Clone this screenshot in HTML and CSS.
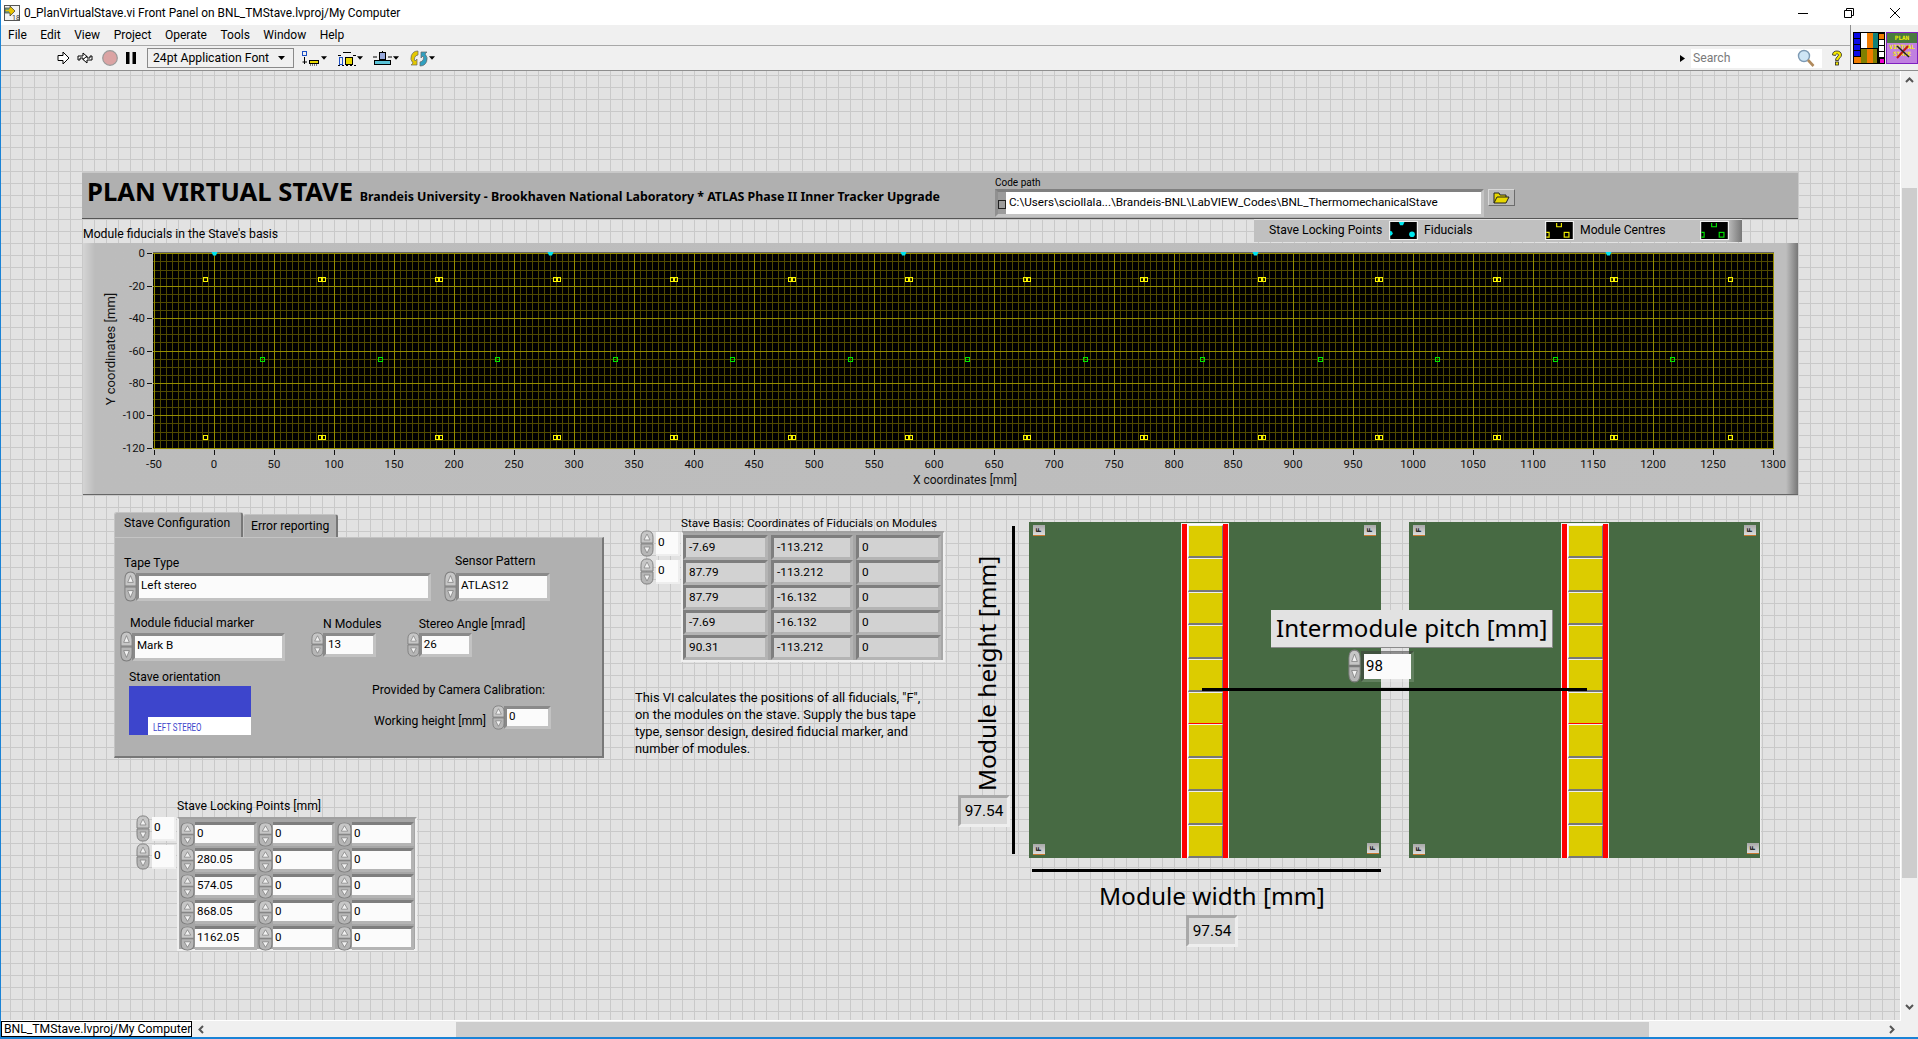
FILE: index.html
```html
<!DOCTYPE html>
<html lang="en">
<head>
  <meta charset="UTF-8" />
  <title>0_PlanVirtualStave.vi Front Panel</title>
  <link rel="stylesheet" href="styles.css">
</head>
<body>

  <!-- shared shapes -->
  <svg class="defs" width="0" height="0">
    <symbol id="spin" viewBox="0 0 14 30" preserveAspectRatio="none">
      <path d="M1 14.5V8Q1 1 7 1T13 8V14.5Z" fill="#c6c6c6" stroke="#7c7c7c"/>
      <path d="M1 15.5V22Q1 29 7 29T13 22V15.5Z" fill="#b6b6b6" stroke="#7c7c7c"/>
      <path d="M7 4.5 10 11H4Z" fill="#f2f2f2" stroke="#666" stroke-width=".6"/>
      <path d="M7 25.5 10 19H4Z" fill="#f2f2f2" stroke="#666" stroke-width=".6"/>
    </symbol>
    <symbol id="caret" viewBox="0 0 7 4"><path d="M0 0H7L3.5 4Z"/></symbol>
  </svg>

  <div class="window">

    <header class="titlebar">
      <svg class="vi-icon" width="16" height="16" viewBox="0 0 16 16">
        <rect x=".5" y=".5" width="15" height="15" fill="#f4f4f4" stroke="#555"/>
        <path d="M1 3H6V1L11 6 6 11V8H1Z" fill="#e8c400" stroke="#333" stroke-width=".7"/>
        <path d="M1 4H5M1 7H5" stroke="#1c6fc4"/>
        <text x="8" y="15" class="vi-ver">18</text>
      </svg>
      <span class="titlebar-text">0_PlanVirtualStave.vi Front Panel on BNL_TMStave.lvproj/My Computer</span>
      <div class="winbtns">
        <svg width="10" height="10" viewBox="0 0 10 10"><path d="M0 5.5H10" stroke="#000"/></svg>
        <svg width="10" height="10" viewBox="0 0 10 10" fill="none" stroke="#000"><path d="M.5 2.5H7.5V9.5H.5ZM2.5 2.5V.5H9.5V7.5H7.5"/></svg>
        <svg width="10" height="10" viewBox="0 0 10 10"><path d="M0 0 10 10M10 0 0 10" stroke="#000"/></svg>
      </div>
    </header>

    <div class="bars">
      <div class="bars-main">
        <nav class="menubar">
          <span>File</span><span>Edit</span><span>View</span><span>Project</span>
          <span>Operate</span><span>Tools</span><span>Window</span><span>Help</span>
        </nav>
        <div class="toolbar">
          <svg class="tb-run" width="13" height="14" viewBox="0 0 13 14"><path d="M1 4.5H6V1L12 7 6 13V9.5H1Z" fill="#fff" stroke="#000"/></svg>
          <svg class="tb-cont" width="16" height="14" viewBox="0 0 16 14" fill="#fff" stroke="#000"><path d="M1 5H6V2L10 5.5 6 9V7H3V9H1Z"/><path d="M15 9H10V12L6 8.5 10 5V7H13V5H15Z"/></svg>
          <svg class="tb-abort" width="16" height="16" viewBox="0 0 16 16"><circle cx="8" cy="8" r="7.3" fill="#dba3a3" stroke="#9a9a9a" stroke-width="1.2"/></svg>
          <svg class="tb-pause" width="10" height="12" viewBox="0 0 10 12"><path d="M0 0H3.5V12H0ZM6.5 0H10V12H6.5Z"/></svg>
          <div class="font-ring">24pt Application Font<svg width="7" height="4"><use href="#caret"/></svg></div>
          <div class="tb-drop tb-align">
            <svg width="18" height="15" viewBox="0 0 18 15" fill="none" stroke="#000"><rect x=".5" y=".5" width="4" height="4" stroke="#1c4fc4"/><path d="M2.5 6V9M.5 11H5M2.5 9V13"/><rect x="7.5" y="9.5" width="9" height="3" fill="#e8d800"/><path d="M8 14H16" stroke-dasharray="1 1"/></svg>
            <svg width="6" height="4"><use href="#caret"/></svg>
          </div>
          <div class="tb-drop tb-dist">
            <svg width="18" height="15" viewBox="0 0 18 15" fill="none" stroke="#000"><path d="M0 4.5H3M5 1.5H13M15 4.5H18"/><rect x="1.5" y="6.5" width="3" height="7" stroke="#1c4fc4"/><rect x="7.5" y="6.5" width="7" height="7" fill="#e8d800"/><path d="M0 14.5H18" stroke-dasharray="2 2"/></svg>
            <svg width="6" height="4"><use href="#caret"/></svg>
          </div>
          <div class="tb-drop tb-size">
            <svg width="19" height="15" viewBox="0 0 19 15" fill="none" stroke="#000"><path d="M0 6H4M15 6H19M9.5 0V9"/><rect x="6.5" y="1.5" width="6" height="7" fill="#9ad"/><rect x="1.5" y="9.5" width="16" height="4" fill="#5cc4d8"/></svg>
            <svg width="6" height="4"><use href="#caret"/></svg>
          </div>
          <div class="tb-drop tb-order">
            <svg width="18" height="17" viewBox="0 0 18 17"><path d="M8 1A7 7 0 0 0 3 13L1 15H7V9L5 11A4 4 0 0 1 8 5Z" fill="#e4c800" stroke="#666" stroke-width=".7"/><path d="M10 16A7 7 0 0 0 15 4L17 2H11V8L13 6A4 4 0 0 1 10 12Z" fill="#30a0c0" stroke="#666" stroke-width=".7"/></svg>
            <svg width="6" height="4"><use href="#caret"/></svg>
          </div>
          <svg class="tb-more" width="5" height="7" viewBox="0 0 5 7"><path d="M0 0 5 3.5 0 7Z"/></svg>
          <div class="searchbox">
            <span>Search</span>
            <svg width="18" height="18" viewBox="0 0 18 18"><circle cx="7" cy="7" r="5.5" fill="#cfe6f6" stroke="#7d9ab4" stroke-width="1.4"/><path d="M11 11 16.5 17" stroke="#b08a5c" stroke-width="2.6"/></svg>
          </div>
          <svg class="tb-help" width="12" height="16" viewBox="0 0 12 16"><path d="M1.5 5C1.5 2 3.5 1 6 1S10.5 2.5 10.5 5 7.5 8 7.5 10.5H4.5C4.5 7 7.5 6.5 7.5 5 7.5 3.5 4.5 3.5 4.5 5.5Z" fill="#f6e800" stroke="#222" stroke-width=".8"/><rect x="4.5" y="12" width="3" height="3" fill="#f6e800" stroke="#222" stroke-width=".8"/></svg>
        </div>
      </div>
      <div class="vi-icons">
        <svg width="32" height="32" viewBox="0 0 32 32" shape-rendering="crispEdges">
          <rect width="32" height="32"/>
          <path d="M1 1H7V6H1ZM1 7H7V12H1ZM1 13H7V18H1ZM1 19H7V24H1Z" fill="#0a0ae6"/>
          <rect x="1" y="25" width="7" height="6" fill="#f07c00"/>
          <rect x="8" y="1" width="6" height="15" fill="#fff"/>
          <rect x="14" y="1" width="6" height="15" fill="#f07c00"/>
          <rect x="20" y="1" width="5" height="15" fill="#108078"/>
          <rect x="8" y="17" width="6" height="14" fill="#808000"/>
          <rect x="14" y="17" width="6" height="14" fill="#f07c00"/>
          <rect x="20" y="17" width="4" height="14" fill="#808000"/>
          <rect x="26" y="2" width="5" height="5" fill="#f07c00"/>
          <path d="M26 8H31V13H26ZM26 14H31V19H26ZM26 20H31V25H26Z" fill="#fff"/>
          <rect x="27" y="27" width="4" height="4" fill="#f000d0"/>
        </svg>
        <div class="vi-badge">
          <span class="vi-badge-top">PLAN</span>
          <span>VIRTUAL</span>
          <span>STAVE</span>
          <svg width="16" height="16" viewBox="0 0 16 16"><path d="M2 15 13 3" stroke="#c01818" stroke-width="2"/><path d="M2 3 14 14" stroke="#222" stroke-width="1.6"/></svg>
        </div>
      </div>
    </div>

    <div class="workspace">
      <main class="panel">

        <section class="banner">
          <h1 class="headline">PLAN VIRTUAL STAVE <small>Brandeis University - Brookhaven National Laboratory * ATLAS Phase II Inner Tracker Upgrade</small></h1>
          <div class="codepath">
            <div class="codepath-label">Code path</div>
            <div class="codepath-row">
              <div class="pathbox">
                <span class="path-pin"></span>
                <span class="path-text">C:\Users\sciollala...\Brandeis-BNL\LabVIEW_Codes\BNL_ThermomechanicalStave</span>
              </div>
              <button class="browse">
                <svg width="17" height="12" viewBox="0 0 17 12"><path d="M1 11V1H6L7 3H13V5" fill="#e8d800" stroke="#222"/><path d="M1 11 4 5H16L13 11Z" fill="#e8d800" stroke="#222"/></svg>
              </button>
            </div>
          </div>
        </section>

        <div class="plot-caption">Module fiducials in the Stave's basis</div>

        <div class="legend">
          <span class="legend-name">Stave Locking Points</span>
          <svg class="swatch" viewBox="0 0 28 18" fill="#00e8f0"><rect width="28" height="18" fill="#000"/><path d="M9 0H15L13.5 3.5H10.5Z"/><circle cx="0" cy="12" r="2.5"/><circle cx="23" cy="13" r="3"/></svg>
          <span class="legend-name legend-fid">Fiducials</span>
          <svg class="swatch" viewBox="0 0 28 18" fill="none" stroke="#f4f000" stroke-width="1.2"><rect width="28" height="18" fill="#000" stroke="none"/><path d="M11 1V5H16V1"/><path d="M0 11H3V16H0"/><rect x="19" y="11" width="5" height="5"/></svg>
          <span class="legend-name legend-mod">Module Centres</span>
          <svg class="swatch" viewBox="0 0 28 18" fill="none" stroke="#00e800" stroke-width="1.2"><rect width="28" height="18" fill="#000" stroke="none"/><path d="M11 1V5H16V1"/><path d="M0 11H3V16H0"/><rect x="19" y="11" width="5" height="5"/></svg>
        </div>

        <div class="graph">
          <svg id="plot" width="1715" height="252" viewBox="0 0 1715 252"></svg>
        </div>

        <section class="tabctl">
          <div class="tabs">
            <div class="tab tab-on">Stave Configuration</div>
            <div class="tab">Error reporting</div>
          </div>
          <div class="tabpage">
            <div class="row row-a">
              <div class="field field-tape">
                <label>Tape Type</label>
                <div class="ctl">
                  <svg class="spin"><use href="#spin"/></svg>
                  <div class="box box-tape">Left stereo</div>
                </div>
              </div>
              <div class="field field-sensor">
                <label>Sensor Pattern</label>
                <div class="ctl">
                  <svg class="spin"><use href="#spin"/></svg>
                  <div class="box box-sensor">ATLAS12</div>
                </div>
              </div>
            </div>
            <div class="row row-b">
              <div class="field field-marker">
                <label>Module fiducial marker</label>
                <div class="ctl">
                  <svg class="spin"><use href="#spin"/></svg>
                  <div class="box box-marker">Mark B</div>
                </div>
              </div>
              <div class="field field-n">
                <label>N Modules</label>
                <div class="ctl">
                  <svg class="spin spin-sm"><use href="#spin"/></svg>
                  <div class="box box-sm">13</div>
                </div>
              </div>
              <div class="field field-angle">
                <label>Stereo Angle [mrad]</label>
                <div class="ctl">
                  <svg class="spin spin-sm"><use href="#spin"/></svg>
                  <div class="box box-sm">26</div>
                </div>
              </div>
            </div>
            <div class="row row-c">
              <div class="field field-orient">
                <label>Stave orientation</label>
                <div class="orient"><span class="orient-tag"><span>LEFT STEREO</span></span></div>
              </div>
              <div class="calib">
                <div class="calib-head">Provided by Camera Calibration:</div>
                <div class="calib-row">
                  <span class="calib-name">Working height [mm]</span>
                  <svg class="spin spin-xs"><use href="#spin"/></svg>
                  <div class="box box-height">0</div>
                </div>
              </div>
            </div>
          </div>
        </section>

        <section class="arrayblock array-basis">
          <div class="array-index">
            <div class="ctl"><svg class="spin spin-idx"><use href="#spin"/></svg><div class="idx">0</div></div>
            <div class="ctl"><svg class="spin spin-idx"><use href="#spin"/></svg><div class="idx">0</div></div>
          </div>
          <div>
            <div class="array-label">Stave Basis: Coordinates of Fiducials on Modules</div>
            <div class="table table-read">
              <div class="cell">-7.69</div><div class="cell">-113.212</div><div class="cell">0</div>
              <div class="cell">87.79</div><div class="cell">-113.212</div><div class="cell">0</div>
              <div class="cell">87.79</div><div class="cell">-16.132</div><div class="cell">0</div>
              <div class="cell">-7.69</div><div class="cell">-16.132</div><div class="cell">0</div>
              <div class="cell">90.31</div><div class="cell">-113.212</div><div class="cell">0</div>
            </div>
          </div>
        </section>

        <p class="note">This VI calculates the positions of all fiducials, "F",<br>on the modules on the stave. Supply the bus tape<br>type, sensor design, desired fiducial marker, and<br>number of modules.</p>

        <section class="arrayblock array-lock">
          <div class="array-index">
            <div class="ctl"><svg class="spin spin-idx"><use href="#spin"/></svg><div class="idx">0</div></div>
            <div class="ctl"><svg class="spin spin-idx"><use href="#spin"/></svg><div class="idx">0</div></div>
          </div>
          <div>
            <div class="array-label">Stave Locking Points [mm]</div>
            <div class="table table-edit" id="lock-table"></div>
          </div>
        </section>

        <div class="module module-a"></div>
        <div class="module module-b"></div>

        <div class="bar bar-height"></div>
        <div class="bar bar-width"></div>
        <div class="bar bar-pitch"></div>

        <div class="dim dim-height">Module height [mm]</div>
        <div class="dim dim-width">Module width [mm]</div>
        <div class="readout readout-height">97.54</div>
        <div class="readout readout-width">97.54</div>

        <div class="pitch-label">Intermodule pitch [mm]</div>
        <div class="ctl pitch-ctl">
          <svg class="spin spin-pitch"><use href="#spin"/></svg>
          <div class="box box-pitch">98</div>
        </div>

      </main>
      <aside class="vscroll">
        <svg width="9" height="6" viewBox="0 0 9 6" fill="none" stroke="#555" stroke-width="2"><path d="M1 5 4.5 1.5 8 5"/></svg>
        <div class="vthumb"></div>
        <svg width="9" height="6" viewBox="0 0 9 6" fill="none" stroke="#555" stroke-width="2"><path d="M1 1 4.5 4.5 8 1"/></svg>
      </aside>
    </div>

    <footer class="hscroll">
      <div class="target">BNL_TMStave.lvproj/My Computer</div>
      <svg class="arrow-l" width="6" height="9" viewBox="0 0 6 9" fill="none" stroke="#555" stroke-width="2"><path d="M5 1 1.5 4.5 5 8"/></svg>
      <div class="hthumb"></div>
      <svg class="arrow-r" width="6" height="9" viewBox="0 0 6 9" fill="none" stroke="#555" stroke-width="2"><path d="M1 1 4.5 4.5 1 8"/></svg>
    </footer>
  </div>

  <script src="plot.js"></script>
</body>
</html>
```

FILE: styles.css
```css
:root {
  --canvas: #e2e2e2;
  --grid: #c9c9c9;
  --panel: #b0b0b0;
  --chrome: #f0f0f0;
  --blue-edge: #1a83d6;
  --ui: 12.2px;
}

* {
  margin: 0;
  padding: 0;
  box-sizing: border-box;
}

body {
  font-family: Roboto, "Noto Sans", sans-serif;
  font-size: var(--ui);
  color: #000;
  background: var(--canvas);
  overflow: hidden;
}

.defs {
  position: absolute;
}

.window {
  height: 100vh;
  display: flex;
  flex-direction: column;
  border-left: 1px solid var(--blue-edge);
  border-bottom: 2px solid var(--blue-edge);
}

/* title bar */
.titlebar {
  height: 25px;
  flex: none;
  background: #fff;
  display: flex;
  align-items: center;
  padding-left: 3px;
}

.vi-ver {
  font-size: 7px;
  fill: #333;
}

.titlebar-text {
  margin-left: 4px;
  font-size: 11.9px;
}

.winbtns {
  margin-left: auto;
  display: flex;
  gap: 36px;
  padding-right: 18px;
}

/* menu and tool bars */
.bars {
  height: 46px;
  flex: none;
  display: flex;
  border-bottom: 1px solid #8e8e8e;
  background: var(--chrome);
}

.bars-main {
  flex: 1;
}

.menubar {
  height: 21px;
  display: flex;
  align-items: center;
  gap: 13.5px;
  padding-left: 7px;
  font-size: 12px;
  border-bottom: 1px solid #a8a8a8;
}

.toolbar {
  height: 24px;
  display: flex;
  align-items: center;
  padding-left: 56px;
}

.tb-cont { margin-left: 7px; }
.tb-abort { margin-left: 9px; }
.tb-pause { margin-left: 8px; }

.font-ring {
  width: 147px;
  height: 20px;
  margin-left: 11px;
  border: 1px solid #8a8a8a;
  display: flex;
  align-items: center;
  justify-content: space-between;
  padding: 0 8px 0 5px;
  white-space: nowrap;
}

.tb-drop {
  display: flex;
  align-items: center;
  gap: 1px;
}

.tb-align { margin-left: 8px; }
.tb-dist { margin-left: 11px; }
.tb-size { margin-left: 10px; }
.tb-order { margin-left: 11px; }

.tb-more { margin-left: 1245px; }

.searchbox {
  width: 131px;
  height: 19px;
  margin-left: 6px;
  background: #fff;
  display: flex;
  align-items: center;
  justify-content: space-between;
  padding: 0 7px 0 2px;
  color: #7a7a7a;
}

.tb-help { margin-left: 9px; }

.vi-icons {
  width: 68px;
  flex: none;
  display: flex;
  gap: 1px;
  align-items: center;
  padding-left: 2px;
  border-left: 1px solid #8e8e8e;
  background: var(--chrome);
}

.vi-badge {
  position: relative;
  width: 32px;
  height: 32px;
  background: linear-gradient(#4a7a40 0 10px, #c080e0 10px);
  border: 1px solid #8020c0;
  display: flex;
  flex-direction: column;
  align-items: center;
  font: bold 6px/7px "DejaVu Sans Mono", monospace;
  color: #f4f000;
  overflow: hidden;
}

.vi-badge-top {
  margin-top: 1px;
  margin-bottom: 2px;
}

.vi-badge svg {
  position: absolute;
  left: 8px;
  top: 10px;
}

/* front panel */
.workspace {
  flex: 1;
  min-height: 0;
  display: flex;
}

.panel {
  flex: 1;
  position: relative;
  overflow: hidden;
  border-bottom: 1px solid #fff;
  border-right: 1px solid #fff;
  background-color: var(--canvas);
  background-image:
    linear-gradient(var(--grid) 1px, transparent 1px),
    linear-gradient(90deg, var(--grid) 1px, transparent 1px);
  background-size: 12px 12px;
  background-position: 0 4px, 9px 0;
}

.vscroll {
  width: 17px;
  flex: none;
  background: var(--chrome);
  display: flex;
  flex-direction: column;
  align-items: center;
  padding: 6px 0 5px;
}

.vthumb {
  width: 15px;
  height: 690px;
  margin: 105px 0 126px;
  background: #cdcdcd;
}

.hscroll {
  height: 16px;
  flex: none;
  background: var(--chrome);
  display: flex;
  align-items: center;
}

.target {
  width: 191px;
  height: 16px;
  border: 1px solid #000;
  background: #fff;
  line-height: 14px;
  padding-left: 2px;
  white-space: nowrap;
}

.arrow-l { margin-left: 6px; }

.hthumb {
  width: 1193px;
  height: 15px;
  margin-left: 252px;
  background: #cdcdcd;
}

.arrow-r { margin-left: 240px; }

/* banner */
.banner {
  position: absolute;
  left: 81px;
  top: 101px;
  width: 1716px;
  height: 47px;
  background: var(--panel);
  border-top: 1px solid #c8c8c8;
  border-bottom: 1px solid #555;
  display: flex;
  padding-left: 5px;
}

.headline {
  width: 908px;
  flex: none;
  font-family: "Noto Sans", sans-serif;
  font-size: 25.6px;
  font-weight: bold;
  line-height: 38px;
  white-space: nowrap;
}

.headline small {
  font-size: 12.4px;
}

.codepath {
  padding-top: 3px;
}

.codepath-label {
  font-size: 10px;
  line-height: 13px;
}

.codepath-row {
  display: flex;
  gap: 4px;
  align-items: flex-start;
}

.pathbox {
  width: 489px;
  height: 28px;
  border: 3px solid;
  border-color: #808080 #c4c4c4 #c4c4c4 #909090;
  background: #9c9c9c;
  display: flex;
}

.path-pin {
  width: 8px;
  flex: none;
  border: 1px solid #222;
  height: 9px;
  margin-top: 8px;
}

.path-text {
  flex: 1;
  background: #fff;
  padding-left: 3px;
  line-height: 20px;
  font-size: 11.7px;
  white-space: nowrap;
}

.browse {
  width: 27px;
  height: 17px;
  background: #b8b8b8;
  border: 1px solid;
  border-color: #d8d8d8 #6c6c6c #6c6c6c #d8d8d8;
  display: flex;
  align-items: center;
  justify-content: center;
}

.plot-caption {
  position: absolute;
  left: 82px;
  top: 155px;
  line-height: 16px;
}

/* legend */
.legend {
  position: absolute;
  left: 1253px;
  top: 148px;
  width: 488px;
  height: 23px;
  display: flex;
  align-items: center;
  padding: 0 0 2px 15px;
  background: linear-gradient(90deg, #c0c0c0 97%, #777);
  border-top: 1px solid #e0e0e0;
}

.legend-name {
  flex: none;
}

.legend-name:first-child { width: 120px; }
.legend-fid { width: 121px; margin-left: 6px; }
.legend-mod { width: 120px; margin-left: 6px; }

.swatch {
  width: 29px;
  height: 19px;
  flex: none;
  border: 1px solid #eee;
}

/* graph */
.graph {
  position: absolute;
  left: 82px;
  top: 172px;
  width: 1715px;
  height: 252px;
  background: linear-gradient(90deg, #d4d4d4, #bcbcbc 12px, #bebebe 1703px, #777);
  border-bottom: 1px solid #666;
}

.tick {
  font-size: 12px;
  fill: #111;
}

.tick-num {
  font-size: 11.4px;
}

.tick-ytitle {
  font-size: 13px;
}

/* tab control */
.tabctl {
  position: absolute;
  left: 113px;
  top: 441px;
  width: 490px;
}

.tabs {
  height: 25px;
  display: flex;
  align-items: flex-end;
}

.tab {
  width: 95px;
  height: 23px;
  background: var(--panel);
  border-top: 1px solid #c4c4c4;
  border-left: 1px solid #c4c4c4;
  border-right: 2px solid #777;
  border-radius: 3px 3px 0 0;
  padding-left: 7px;
  line-height: 22px;
  white-space: nowrap;
}

.tab-on {
  width: 129px;
  height: 25px;
  padding-left: 9px;
  line-height: 21px;
}

.tabpage {
  height: 221px;
  background: var(--panel);
  border: 1px solid #c4c4c4;
  border-right: 2px solid #777;
  border-bottom: 2px solid #777;
}

.row {
  display: flex;
  align-items: flex-start;
}

.field label {
  display: block;
  line-height: 16px;
  white-space: nowrap;
}

.ctl {
  display: flex;
  align-items: center;
}

.spin {
  width: 13px;
  height: 31px;
  flex: none;
  position: relative;
  z-index: 1;
}

.spin-sm { height: 25px; }
.spin-xs { height: 25px; margin-left: 3px; }
.spin-idx { width: 14px; height: 27px; }
.spin-pitch { height: 34px; }

.box {
  height: 28px;
  flex: none;
  border: 3px solid;
  border-color: #8a8a8a #c2c2c2 #c2c2c2 #8a8a8a;
  background: #fbfbfb;
  padding-left: 2px;
  line-height: 19px;
  font-size: 11.6px;
  white-space: nowrap;
}

.row-a { padding: 17px 0 0 9px; height: 81px; }
.row-a .field-tape label { margin-bottom: 0; }
.row-a .field-sensor { margin-left: 13px; margin-top: -2px; }
.row-a .field-sensor label { margin-left: 11px; margin-bottom: 2px; }
.box-tape { width: 295px; margin-left: -1px; }
.box-sensor { width: 94px; margin-left: -1px; }

.row-b { padding-left: 5px; height: 46px; margin-top: -4px; }
.field-marker label { margin-left: 10px; margin-bottom: 0; }
.box-marker { width: 153px; margin-left: -1px; }
.field-n { margin-left: 26px; margin-top: 1px; }
.field-n label { margin-left: 12px; margin-bottom: 0; }
.field-angle { margin-left: 25px; margin-top: 1px; }
.field-angle label { margin-left: 12px; margin-bottom: 0; }
.box-sm { width: 53px; height: 24px; line-height: 17px; margin-left: -1px; }

.row-c { padding-left: 14px; margin-top: 8px; }
.orient {
  width: 122px;
  height: 49px;
  margin-top: 1px;
  background: #3d45cc;
  position: relative;
}

.orient-tag {
  position: absolute;
  left: 19px;
  top: 31px;
  width: 103px;
  height: 18px;
  background: #fff;
  color: #3d45cc;
  font-size: 11px;
  line-height: 21px;
  padding-left: 5px;
  white-space: nowrap;
}

.orient-tag span {
  display: inline-block;
  transform: scaleX(.72);
  transform-origin: 0 50%;
}

.calib {
  margin-left: 121px;
  margin-top: 13px;
}

.calib-head {
  line-height: 16px;
}

.calib-row {
  display: flex;
  align-items: center;
  margin-left: 2px;
  margin-top: 7px;
}

.calib-name {
  width: 115px;
  margin-top: 7px;
  white-space: nowrap;
}

.box-height {
  width: 47px;
  height: 23px;
  line-height: 15px;
  margin-left: -1px;
}

/* arrays */
.arrayblock {
  position: absolute;
  display: flex;
}

.array-basis {
  left: 639px;
  top: 446px;
}

.array-lock {
  left: 135px;
  top: 729px;
}

.array-index {
  width: 41px;
  flex: none;
  display: flex;
  flex-direction: column;
  gap: 1px;
  padding-top: 13px;
}

.array-lock .array-index {
  padding-top: 15px;
}

.idx {
  width: 24px;
  height: 24px;
  margin-left: 2px;
  background: #fbfbfb;
  border-bottom: 2px solid #eee;
  border-right: 2px solid #eee;
  padding-left: 2px;
  line-height: 21px;
  font-size: 11.8px;
}

.array-label {
  height: 14px;
  line-height: 13px;
  font-size: 11.7px;
  white-space: nowrap;
}

.array-lock .array-label {
  height: 17px;
  font-size: var(--ui);
}

.table {
  display: grid;
  background: #a6a6a6;
  border: 2px solid;
  border-color: #a0a0a0 #efefef #efefef #efefef;
}

.table-read {
  width: 264px;
  grid-template-columns: 85px 82px 85px;
  grid-auto-rows: 25px;
  column-gap: 3px;
  padding: 2px 0 0 0;
}

.cell {
  border: 3px solid;
  border-color: #7e7e7e #b4b4b4 #b4b4b4 #7e7e7e;
  background: #d2d2d2;
  padding-left: 3px;
  line-height: 18px;
  font-size: 11.8px;
}

.table-edit {
  width: 240px;
  grid-template-columns: 78px 79px 78px;
  grid-auto-rows: 26px;
  padding: 2px 0 0 1px;
  height: 134px;
}

.cell-edit {
  display: flex;
  align-items: center;
}

.cell-edit .spin {
  width: 15px;
  height: 25px;
}

.cell-edit .box {
  width: 62px;
  height: 24px;
  line-height: 17px;
  border-left-width: 0;
  border-color: #7e7e7e #b4b4b4 #b4b4b4 #7e7e7e;
}

.note {
  position: absolute;
  left: 634px;
  top: 618px;
  font-size: 12.9px;
  line-height: 17px;
  white-space: nowrap;
}

/* module drawing */
.module {
  position: absolute;
  top: 451px;
  width: 352px;
  height: 336px;
  background: #476a43;
  display: flex;
  justify-content: center;
}

.module-a { left: 1028px; }
.module-b { left: 1408px; border-right: 1px solid #eee; }

.strip {
  width: 48px;
  margin-top: 1px;
  background: #fff;
  border: 1px solid #f0f0f0;
  border-bottom: none;
  display: flex;
}

.rail {
  width: 5px;
  background: #fe0000;
  flex: none;
}

.rail:first-child { margin-right: 1px; }

.cells {
  flex: 1;
  display: flex;
  flex-direction: column;
  padding-top: 1px;
}

.cells div {
  flex: 1;
  background: #dccc00;
  border-top: 1px solid #eee;
  border-left: 1px solid #eee;
  border-right: 1px solid #777;
  border-bottom: 2px solid #777;
}

.cells .cell-split {
  border-bottom: 1px solid #fe0000;
}

.fid {
  position: absolute;
  width: 12px;
  height: 11px;
  background: linear-gradient(#a8a8a8, #dcdcdc);
  border-bottom: 1px solid #c87830;
  font: bold 7px/10px "Liberation Sans", sans-serif;
  text-align: center;
}

.fid span {
  display: block;
  transform: rotate(-90deg);
}

.fid-tl { left: 4px; top: 3px; }
.fid-tr { left: 335px; top: 3px; }
.fid-bl { left: 4px; top: 322px; }
.fid-br { left: 338px; top: 321px; }

.bar {
  position: absolute;
  background: #000;
}

.bar-height { left: 1011px; top: 455px; width: 3px; height: 328px; }
.bar-width { left: 1031px; top: 798px; width: 349px; height: 3px; }
.bar-pitch { left: 1201px; top: 617px; width: 385px; height: 3px; }

.dim {
  position: absolute;
  font-family: "Noto Sans", sans-serif;
  font-size: 24.4px;
  line-height: 34px;
  white-space: nowrap;
}

.dim-height {
  left: 969px;
  top: 484px;
  height: 237px;
  writing-mode: vertical-rl;
  transform: rotate(180deg);
  text-align: center;
}

.dim-width {
  left: 1098px;
  top: 808px;
}

.readout {
  position: absolute;
  width: 52px;
  height: 32px;
  border: 3px solid;
  border-color: #a8a8a8 #eee #eee #a8a8a8;
  background: #d8d8d8;
  font-size: 15.4px;
  line-height: 26px;
  text-align: center;
}

.readout-height { left: 957px; top: 724px; }
.readout-width { left: 1185px; top: 844px; }

.pitch-label {
  position: absolute;
  left: 1270px;
  top: 539px;
  width: 282px;
  height: 38px;
  background: #e2e2e2;
  border-right: 1px solid #8a8a8a;
  border-bottom: 1px solid #8a8a8a;
  font-family: "Noto Sans", sans-serif;
  font-size: 24.1px;
  line-height: 36px;
  padding-left: 5px;
  white-space: nowrap;
}

.pitch-ctl {
  position: absolute;
  left: 1347px;
  top: 578px;
}

.box-pitch {
  width: 53px;
  height: 31px;
  border-color: rgba(60, 60, 60, .5) rgba(255, 255, 255, .15) rgba(255, 255, 255, .15) rgba(60, 60, 60, .5);
  font-size: 15px;
  line-height: 25px;
  background-clip: padding-box;
}
```

FILE: plot.js
```js
// chart and repeated parts of the panel
var ox = 83, oy = 243;          // graph origin on screen
var plotL = 153, plotR = 1774, plotT = 252, plotB = 448;
var minorCol = '#504a00', majorCol = '#958d00';

function px(v) { return Math.round(214.3 + v * 1.199) - ox; }
function py(v) { return Math.round(253.3 - v * 1.62) - oy; }

var s = [];
s.push('<rect x="' + (plotL - ox) + '" y="' + (plotT - oy) + '" width="' + (plotR - plotL) + '" height="' + (plotB - plotT) + '" fill="#000"/>');
s.push('<g shape-rendering="crispEdges">');

// minor grid every 5 mm, major every 50 (x) and 20 (y)
for (var w = 0; w >= -120; w -= 5) {
  if (w % 20 !== 0) s.push('<path d="M' + (plotL - ox) + ' ' + (py(w) + .5) + 'H' + (plotR - ox) + '" stroke="' + minorCol + '"/>');
}
for (var v = -50; v <= 1300; v += 5) {
  if (v % 50 !== 0) s.push('<path d="M' + (px(v) + .5) + ' ' + (plotT - oy) + 'V' + (plotB - oy) + '" stroke="' + minorCol + '"/>');
}
for (w = 0; w >= -120; w -= 20) {
  s.push('<path d="M' + (plotL - ox) + ' ' + (py(w) + .5) + 'H' + (plotR - ox) + '" stroke="' + majorCol + '"/>');
}
for (v = -50; v <= 1300; v += 50) {
  s.push('<path d="M' + (px(v) + .5) + ' ' + (plotT - oy) + 'V' + (plotB - oy) + '" stroke="' + majorCol + '"/>');
}

// axis frame and ticks
s.push('<path d="M' + (plotL - ox) + ' ' + (plotT - oy + .5) + 'H' + (plotR - ox) + '" stroke="#666"/>');
for (var t = -50; t <= 1300; t += 50) {
  s.push('<path d="M' + (px(t) + .5) + ' ' + (plotB - oy + 2) + 'v5" stroke="#111"/>');
  s.push('<text class="tick tick-num" text-anchor="middle" x="' + px(t) + '" y="' + (plotB - oy + 20) + '">' + t + '</text>');
}
for (var u = 0; u >= -120; u -= 20) {
  s.push('<path d="M' + (plotL - ox - 6) + ' ' + (py(u) + .5) + 'h5" stroke="#111"/>');
  s.push('<text class="tick tick-num" text-anchor="end" x="' + (plotL - ox - 8) + '" y="' + (py(u) + 4) + '">' + u + '</text>');
}

function square(x, y, col) {
  s.push('<rect x="' + (px(x) - 2) + '.5" y="' + (py(y) - 2) + '.5" width="4" height="4" fill="none" stroke="' + col + '"/>');
}

// fiducials and module centres, 13 modules at 98 mm pitch
for (var k = 0; k < 13; k++) {
  var a = -7.69 + 98 * k, b = 87.79 + 98 * k;
  square(a, -16.132, '#f8f400');
  square(b, -16.132, '#f8f400');
  square(a, -113.212, '#f8f400');
  square(b, -113.212, '#f8f400');
  square(40.05 + 98 * k, -65, '#00e800');
}
s.push('</g>');

// locking points sit on the top edge, only their lower half shows
[0, 280.05, 574.05, 868.05, 1162.05].forEach(function (x) {
  var c = px(x) + .5;
  s.push('<path d="M' + (c - 3) + ' ' + (plotT - oy) + 'H' + (c + 3) + 'L' + (c + 1.5) + ' ' + (plotT - oy + 3.5) + 'H' + (c - 1.5) + 'Z" fill="#00e4f0"/>');
});

s.push('<text class="tick" text-anchor="middle" x="' + (965 - ox) + '" y="' + (484 - oy) + '">X coordinates [mm]</text>');
s.push('<text class="tick tick-ytitle" text-anchor="middle" transform="translate(' + (115 - ox) + ' ' + (349 - oy) + ') rotate(-90)">Y coordinates [mm]</text>');
document.getElementById('plot').innerHTML = s.join('');

// locking points table
var rows = ['0', '280.05', '574.05', '868.05', '1162.05'];
var html = '';
rows.forEach(function (r) {
  [r, '0', '0'].forEach(function (val) {
    html += '<div class="cell-edit"><svg class="spin"><use href="#spin"/></svg><div class="box">' + val + '</div></div>';
  });
});
document.getElementById('lock-table').innerHTML = html;

// the two stave modules
var cells = '';
for (var i = 0; i < 10; i++) {
  cells += i === 5 ? '<div class="cell-split"></div>' : '<div></div>';
}
var fids = ['tl', 'tr', 'bl', 'br'].map(function (c) {
  return '<div class="fid fid-' + c + '"><span>F</span></div>';
}).join('');
document.querySelectorAll('.module').forEach(function (m) {
  m.innerHTML = fids + '<div class="strip"><div class="rail"></div><div class="cells">' + cells + '</div><div class="rail"></div></div>';
});
```
